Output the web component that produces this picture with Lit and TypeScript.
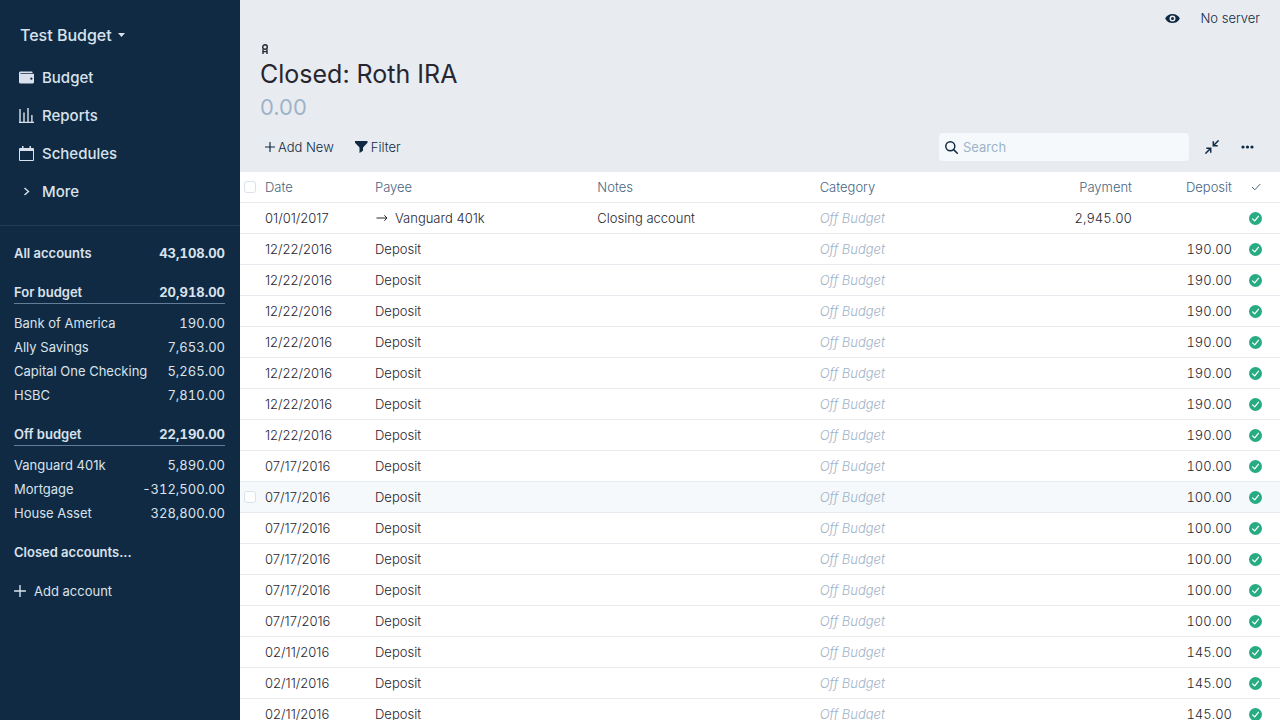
import { LitElement, html, css, svg, nothing } from "lit";
import { customElement, state } from "lit/decorators.js";

interface Account {
  name: string;
  balance: string;
}

interface Transaction {
  date: string;
  payee: string;
  transfer?: boolean;
  notes?: string;
  payment?: string;
  deposit?: string;
}

const icons = {
  caret: svg`<svg viewBox="0 0 7 4" width="7" height="4"><path d="M0 0h7L3.500 4z" fill="currentColor"/></svg>`,
  wallet: svg`<svg viewBox="0 0 20 20" width="15" height="15"><path fill="currentColor" d="M0 4c0-1.1.9-2 2-2h15a1 1 0 0 1 1 1v1H2v1h17a1 1 0 0 1 1 1v10a2 2 0 0 1-2 2H2a2 2 0 0 1-2-2V4zm16.5 9a1.500 1.500 0 1 0 0-3 1.500 1.500 0 0 0 0 3z"/></svg>`,
  reports: svg`<svg viewBox="0 0 15 15" width="15" height="15"><path fill="currentColor" d="M0 13.800h15V15H0zM.3 1h1.400v13H.3zM4.300 4.500h1.400V14H4.300zM8.300 0h1.400v14H8.300zM12.200 7h1.400v7h-1.400z"/></svg>`,
  calendar: svg`<svg viewBox="0 0 15 15" width="15" height="15"><path fill="currentColor" fill-rule="evenodd" d="M1 2h2V0h1.500v2h6V0H12v2h2a1 1 0 0 1 1 1v11a1 1 0 0 1-1 1H1a1 1 0 0 1-1-1V3a1 1 0 0 1 1-1zm0 3v9h13V5z"/></svg>`,
  chevron: svg`<svg viewBox="0 0 15 15" width="15" height="15"><path d="M5.500 4l4 3.500-4 3.500" fill="none" stroke="currentColor" stroke-width="1.400"/></svg>`,
  plus: (size: number) => svg`<svg viewBox="0 0 12 12" width=${size} height=${size}><path d="M6 .5v11M.5 6h11" fill="none" stroke="currentColor" stroke-width="1.400" stroke-linecap="round"/></svg>`,
  eye: svg`<svg viewBox="0 0 20 20" width="15" height="15"><path fill="currentColor" d="M.2 10a11 11 0 0 1 19.600 0A11 11 0 0 1 .2 10zm9.800 4a4 4 0 1 0 0-8 4 4 0 0 0 0 8zm0-2a2 2 0 1 1 0-4 2 2 0 0 1 0 4z"/></svg>`,
  note: svg`<svg viewBox="0 0 10 10" width="10" height="10"><g fill="none" stroke="currentColor" stroke-width="1.400"><circle cx="5" cy="3" r="2.300"/><path d="M3 5.300v4.600M7 5.300v4.600M3 7.600h4"/></g></svg>`,
  funnel: svg`<svg viewBox="0 0 13 12" width="13" height="12"><path fill="currentColor" d="M0 0h12.500v1.800L8 6.500v3.300L4.500 12V6.500L0 1.800z"/></svg>`,
  search: svg`<svg viewBox="0 0 13 13" width="13" height="13"><g fill="none" stroke="currentColor" stroke-width="1.500" stroke-linecap="round"><circle cx="5.300" cy="5.300" r="4.500"/><path d="M8.600 8.600l3.700 3.700"/></g></svg>`,
  collapse: svg`<svg viewBox="0 0 14 14" width="14" height="14"><g fill="none" stroke="currentColor" stroke-width="1.500"><path d="M13.600.4L8.800 5.200M8.300 1.300v4.400h4.400M.4 13.600l4.800-4.800M5.700 12.700V8.300H1.300"/></g></svg>`,
  dots: svg`<svg viewBox="0 0 13 4" width="13" height="4"><g fill="currentColor"><circle cx="2" cy="2" r="1.600"/><circle cx="6.500" cy="2" r="1.600"/><circle cx="11" cy="2" r="1.600"/></g></svg>`,
  check: svg`<svg viewBox="0 0 10 8" width="10" height="8"><path d="M1 4l2.800 2.800L9.300 1" fill="none" stroke="currentColor"/></svg>`,
  cleared: svg`<svg viewBox="0 0 13 13" width="13" height="13"><circle cx="6.500" cy="6.500" r="6.500" fill="currentColor"/><path d="M3.600 6.900l2.100 2L9.400 4.300" fill="none" stroke="#fff" stroke-width="1.300" stroke-linecap="round" stroke-linejoin="round"/></svg>`,
  arrow: svg`<svg viewBox="0 0 12 10" width="12" height="10"><path d="M.5 5h10.500M8.300 2.300L11 5 8.300 7.700" fill="none" stroke="currentColor"/></svg>`,
};

const forBudget: Account[] = [
  { name: "Bank of America", balance: "190.00" },
  { name: "Ally Savings", balance: "7,653.00" },
  { name: "Capital One Checking", balance: "5,265.00" },
  { name: "HSBC", balance: "7,810.00" },
];

const offBudget: Account[] = [
  { name: "Vanguard 401k", balance: "5,890.00" },
  { name: "Mortgage", balance: "-312,500.00" },
  { name: "House Asset", balance: "328,800.00" },
];

const deposits = (count: number, date: string, deposit: string): Transaction[] =>
  Array.from({ length: count }, () => ({ date, payee: "Deposit", deposit }));

const transactions: Transaction[] = [
  { date: "01/01/2017", payee: "Vanguard 401k", transfer: true, notes: "Closing account", payment: "2,945.00" },
  ...deposits(7, "12/22/2016", "190.00"),
  ...deposits(6, "07/17/2016", "100.00"),
  ...deposits(3, "02/11/2016", "145.00"),
];

const shared = css`
  * {
    box-sizing: border-box;
  }
  svg {
    display: block;
    flex: none;
  }
  button {
    font: inherit;
    color: inherit;
    background: none;
    border: 0;
    padding: 0;
    display: flex;
    align-items: center;
    cursor: pointer;
  }
  a {
    color: inherit;
    text-decoration: none;
  }
`;

@customElement("budget-sidebar")
class BudgetSidebar extends LitElement {
  static styles = [
    shared,
    css`
      :host {
        display: block;
        width: 240px;
        flex: none;
        background: #102a43;
        color: #d9e2ec;
        overflow: hidden;
      }
      .title {
        height: 59px;
        padding: 11px 20px 0;
        display: flex;
        align-items: center;
        font-size: 16px;
        font-weight: 500;
      }
      .title button {
        gap: 6px;
      }
      .nav {
        display: flex;
        flex-direction: column;
        padding-bottom: 14px;
        border-bottom: 1px solid #243b53;
        font-size: 15px;
        font-weight: 500;
      }
      .item {
        display: flex;
        align-items: center;
        gap: 8px;
        height: 38px;
        padding: 0 19px;
      }
      .item svg {
        margin-bottom: 1px;
      }
      .accounts {
        padding: 0 15px 0 14px;
      }
      .row {
        display: flex;
        align-items: center;
        justify-content: space-between;
        height: 24px;
      }
      .head {
        margin-top: 15px;
        font-weight: 600;
      }
      .ruled {
        margin-bottom: 7px;
        border-bottom: 1px solid #627d98;
      }
      .amount {
        font-feature-settings: "tnum";
      }
      .head .amount {
        font-weight: 700;
      }
      .add {
        margin-top: 15px;
        height: 24px;
        gap: 8px;
      }
    `,
  ];

  private row(a: Account, extra = "") {
    return html`<a class="row ${extra}" href="#"><span>${a.name}</span><span class="amount">${a.balance}</span></a>`;
  }

  render() {
    return html`
      <div class="title"><button>Test Budget ${icons.caret}</button></div>
      <nav class="nav">
        <a class="item" href="#">${icons.wallet}Budget</a>
        <a class="item" href="#">${icons.reports}Reports</a>
        <a class="item" href="#">${icons.calendar}Schedules</a>
        <button class="item">${icons.chevron}More</button>
      </nav>
      <div class="accounts">
        ${this.row({ name: "All accounts", balance: "43,108.00" }, "head")}
        ${this.row({ name: "For budget", balance: "20,918.00" }, "head ruled")}
        ${forBudget.map((a) => this.row(a))}
        ${this.row({ name: "Off budget", balance: "22,190.00" }, "head ruled")}
        ${offBudget.map((a) => this.row(a))}
        <button class="row head">Closed accounts...</button>
        <button class="add">${icons.plus(12)}Add account</button>
      </div>
    `;
  }
}

@customElement("transaction-table")
class TransactionTable extends LitElement {
  @state() private highlighted = 9;

  static styles = [
    shared,
    css`
      :host {
        display: block;
        flex: 1;
        min-height: 0;
        overflow: hidden;
        background: #fff;
      }
      table {
        width: 100%;
        table-layout: fixed;
        border-collapse: separate;
        border-spacing: 0;
        color: #272630;
        font-weight: 300;
      }
      th,
      td {
        height: 31px;
        padding: 0 5px;
        border-bottom: 1px solid #e8ecf0;
        text-align: left;
        font-weight: inherit;
        white-space: nowrap;
      }
      th {
        color: #486581;
      }
      .select {
        width: 20px;
        padding: 0 4px;
      }
      .date {
        width: 110px;
      }
      .money {
        width: 100px;
        text-align: right;
      }
      td.money {
        font-feature-settings: "tnum";
      }
      .status {
        width: 43px;
        padding: 0 18px 0 12px;
        color: #27ab83;
      }
      .status svg {
        margin: 0 auto;
      }
      th.status {
        color: #486581;
      }
      .category {
        color: #9fb3c8;
        font-style: oblique 10deg;
      }
      .payee {
        display: flex;
        align-items: center;
        gap: 7px;
      }
      .payee svg {
        margin-left: 1px;
      }
      .highlighted {
        background: #f5f9fc;
      }
      input {
        appearance: none;
        display: block;
        width: 12px;
        height: 12px;
        margin: 0;
        border: 1px solid #d9e2ec;
        border-radius: 3px;
        background: #fff;
      }
    `,
  ];

  render() {
    return html`
      <table>
        <thead>
          <tr>
            <th class="select"><input type="checkbox" aria-label="Select all" /></th>
            <th class="date">Date</th>
            <th>Payee</th>
            <th>Notes</th>
            <th>Category</th>
            <th class="money">Payment</th>
            <th class="money">Deposit</th>
            <th class="status" aria-label="Cleared">${icons.check}</th>
          </tr>
        </thead>
        <tbody>
          ${transactions.map(
            (t, i) => html`
              <tr class=${i === this.highlighted ? "highlighted" : ""}>
                <td class="select">
                  ${i === this.highlighted ? html`<input type="checkbox" aria-label="Select transaction" />` : nothing}
                </td>
                <td>${t.date}</td>
                <td><div class="payee">${t.transfer ? icons.arrow : nothing}<span>${t.payee}</span></div></td>
                <td>${t.notes ?? ""}</td>
                <td><span class="category">Off Budget</span></td>
                <td class="money">${t.payment ?? ""}</td>
                <td class="money">${t.deposit ?? ""}</td>
                <td class="status">${icons.cleared}</td>
              </tr>
            `
          )}
        </tbody>
      </table>
    `;
  }
}

@customElement("app-root")
class AppRoot extends LitElement {
  static styles = [
    shared,
    css`
      :host {
        display: flex;
        height: 100vh;
        overflow: hidden;
        background: #e8ecf0;
        color: #102a43;
        font-family: Inter, "Liberation Sans", sans-serif;
        font-size: 13px;
        line-height: 16px;
      }
      main {
        flex: 1;
        min-width: 0;
        display: flex;
        flex-direction: column;
      }
      .titlebar {
        display: flex;
        align-items: center;
        justify-content: flex-end;
        gap: 20px;
        height: 36px;
        padding: 0 20px;
        font-weight: 300;
      }
      .heading {
        padding: 8px 20px 0;
      }
      .heading button {
        color: #272630;
      }
      h1 {
        margin: 4px 0 0;
        font-size: 25px;
        line-height: 32px;
        font-weight: 400;
        color: #272630;
      }
      .balance {
        padding-top: 3px;
        font-size: 22px;
        line-height: 28px;
        font-weight: 400;
        color: #9fb3c8;
      }
      .toolbar {
        display: flex;
        align-items: center;
        height: 50px;
        margin-top: 1px;
        padding: 0 26px 0 25px;
      }
      .tools {
        display: flex;
        flex: 1;
        gap: 21px;
        font-weight: 300;
      }
      .tools button {
        gap: 3px;
      }
      .search {
        display: flex;
        align-items: center;
        gap: 5px;
        width: 250px;
        height: 28px;
        padding: 0 6px;
        border-radius: 4px;
        background: #f5f9fc;
      }
      .search input {
        flex: 1;
        min-width: 0;
        padding: 0;
        border: 0;
        outline: 0;
        background: none;
        font: inherit;
        color: inherit;
      }
      .search input::placeholder {
        color: #9fb3c8;
        opacity: 1;
      }
      .actions {
        display: flex;
        gap: 22px;
        padding-left: 16px;
      }
    `,
  ];

  render() {
    return html`
      <budget-sidebar></budget-sidebar>
      <main>
        <div class="titlebar">
          <button aria-label="Toggle privacy">${icons.eye}</button>
          <button>No server</button>
        </div>
        <div class="heading">
          <button aria-label="Account notes">${icons.note}</button>
          <h1>Closed: Roth IRA</h1>
          <div class="balance">0.00</div>
        </div>
        <div class="toolbar">
          <div class="tools">
            <button>${icons.plus(10)}Add New</button>
            <button>${icons.funnel}Filter</button>
          </div>
          <label class="search">${icons.search}<input type="text" placeholder="Search" aria-label="Search" /></label>
          <div class="actions">
            <button aria-label="Collapse">${icons.collapse}</button>
            <button aria-label="Menu">${icons.dots}</button>
          </div>
        </div>
        <transaction-table></transaction-table>
      </main>
    `;
  }
}
